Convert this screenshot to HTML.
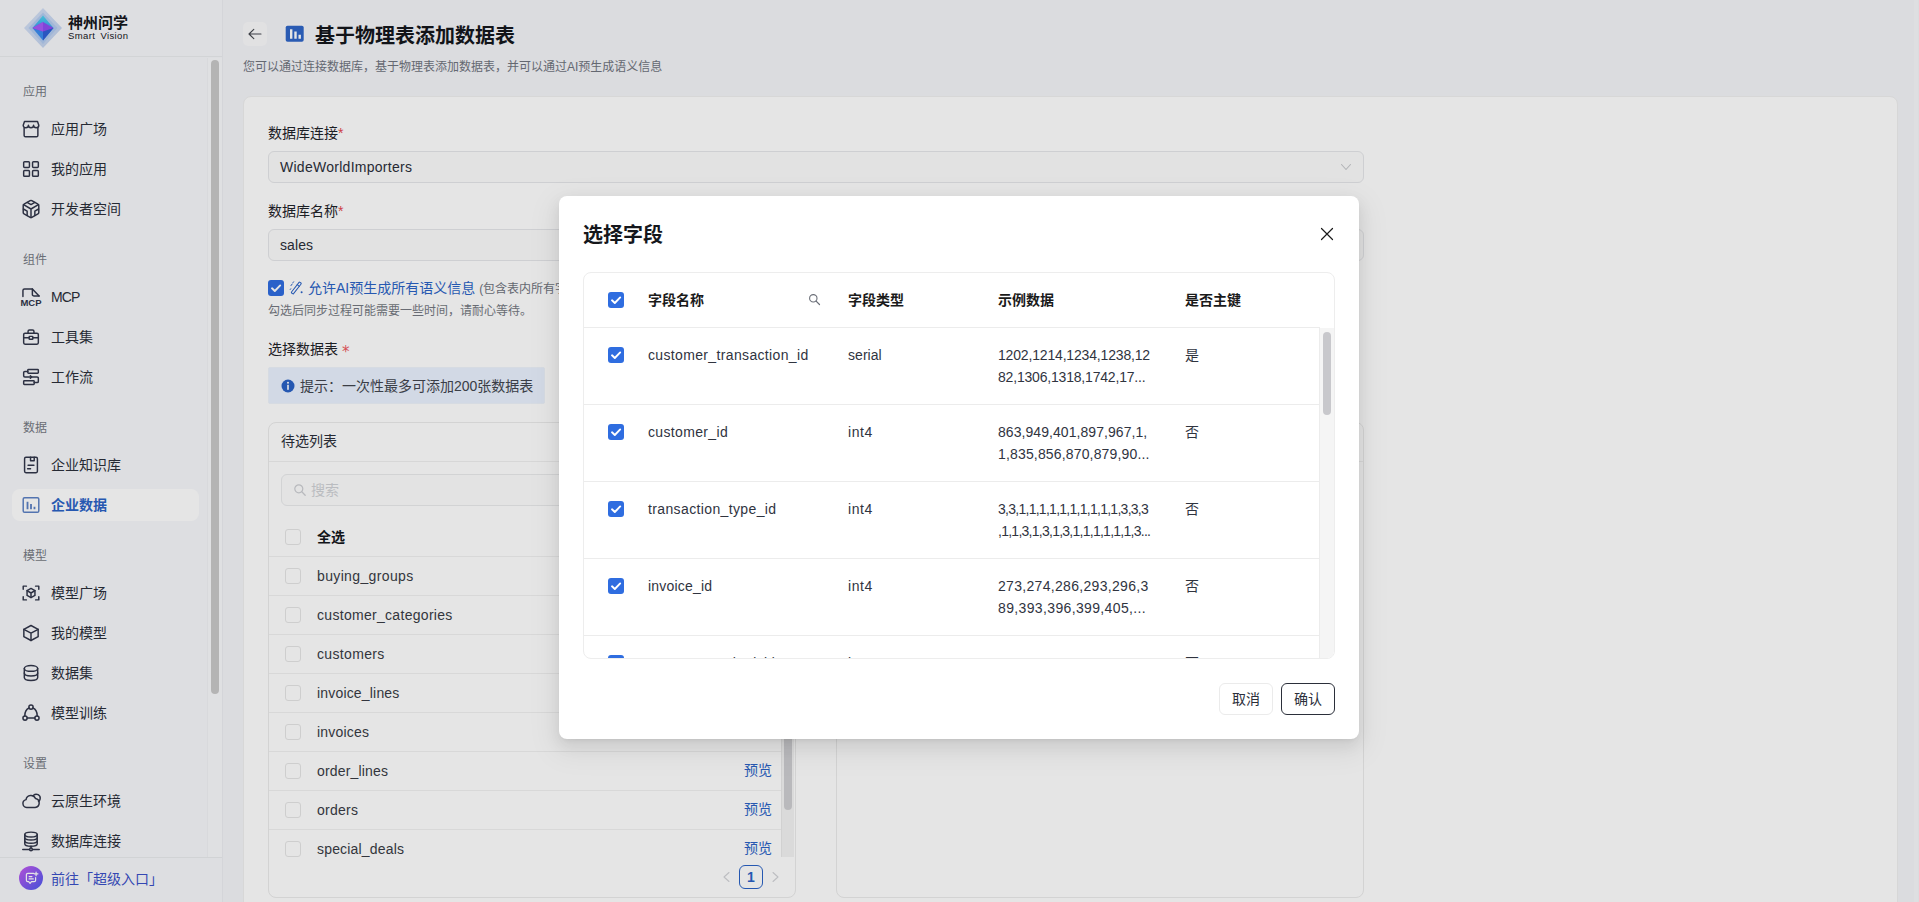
<!DOCTYPE html>
<html lang="zh-CN">
<head>
<meta charset="utf-8">
<title>基于物理表添加数据表</title>
<style>
*{box-sizing:border-box;margin:0;padding:0}
html,body{width:1919px;height:902px;overflow:hidden}
body{font-family:"Liberation Sans","Noto Sans CJK SC",sans-serif;font-size:14px;color:#1f2329;background:#f4f5f9;position:relative}
.abs{position:absolute}
.t{position:absolute;white-space:nowrap;line-height:20px;height:20px}
/* sidebar */
#side{position:absolute;left:0;top:0;width:223px;height:902px;background:#f7f8fb;border-right:1px solid #eceef2}
#side .hd{position:absolute;left:0;top:0;width:222px;height:57px;border-bottom:1px solid #eaecef}
.sec{position:absolute;left:23px;font-size:12px;color:#767a84;line-height:16px;height:16px;white-space:nowrap}
.it{position:absolute;left:51px;font-size:14px;color:#2b2f3a;line-height:20px;height:20px;white-space:nowrap}
.ic{position:absolute;left:20px;width:22px;height:22px}
.ic svg{width:22px;height:22px;display:block;fill:none;stroke:#31364a;stroke-width:1.6;stroke-linecap:round;stroke-linejoin:round}
/* main */
#card{position:absolute;left:243px;top:96px;width:1655px;height:830px;background:#fff;border:1px solid #f0f0f0;border-radius:8px}
.lbl{position:absolute;left:268px;font-size:14px;color:#1f2329;line-height:20px;white-space:nowrap}
.req{color:#e5484d}
.inp{position:absolute;left:268px;width:1096px;height:32px;border:1px solid #e6e7ea;border-radius:6px;background:#fcfcfc;font-size:14px;line-height:30px;padding-left:11px;color:#2b2f3a}
.cb{position:absolute;width:16px;height:16px;border-radius:3px;background:#2f6de0}
.cb svg{position:absolute;left:0;top:0;width:16px;height:16px}
.ucb{position:absolute;width:16px;height:16px;border-radius:3px;border:1px solid #e6e6e6;background:#fff}
.panel{position:absolute;top:422px;width:528px;height:476px;border:1px solid #ebebeb;border-radius:8px;background:#fff}
.row{position:absolute;left:269px;width:512px;height:39px;border-top:1px solid #f1f1f1}
.rt{position:absolute;left:317px;font-size:14px;color:#393c45;line-height:20px;white-space:nowrap}
.pv{position:absolute;left:744px;font-size:14px;color:#2b63c6;line-height:20px;white-space:nowrap}
/* overlay + modal */
#mask{position:absolute;left:0;top:0;width:1919px;height:902px;background:rgba(0,0,0,.1)}
#modal{position:absolute;left:559px;top:197px;width:800px;height:542px}
#mbg{position:absolute;left:0;top:-1px;width:800px;height:543px;background:#fff;border-radius:8px;box-shadow:0 6px 16px rgba(0,0,0,.08),0 3px 6px -4px rgba(0,0,0,.12),0 9px 28px 8px rgba(0,0,0,.05)}
#tbl{position:absolute;left:24px;top:75px;width:752px;height:387px;border:1px solid #ededed;border-radius:8px;overflow:hidden}
.th{position:absolute;top:17px;font-size:14px;font-weight:bold;color:#1a1a1a;line-height:20px;white-space:nowrap}
.tr{position:absolute;left:0;width:736px;height:77px;border-top:1px solid #ececec}
.td{position:absolute;top:16px;font-size:14px;color:#30343f;line-height:22px;white-space:nowrap}
.btn{position:absolute;top:486px;height:32px;border-radius:6px;font-size:14px;line-height:30px;text-align:center;color:#2b2f3a;background:#fff}
</style>
</head>
<body>
<div id="side">
<div class="hd"></div>
<svg class="abs" style="left:22px;top:7px" width="42" height="42" viewBox="0 0 42 42">
<defs><linearGradient id="lg0" x1="0" y1="0" x2="1" y2="1"><stop offset="0" stop-color="#d6e2f6"/><stop offset="1" stop-color="#bfd0ee"/></linearGradient>
<linearGradient id="lg1" x1="0" y1="0" x2="0" y2="1"><stop offset="0" stop-color="#4fd6ee"/><stop offset="1" stop-color="#3f9ff0"/></linearGradient></defs>
<path d="M21 1L40 21 21 41 2 21z" fill="url(#lg0)"/>
<path d="M21 5.500L35.500 21 21 37 6.500 21z" fill="#adc8f0" opacity=".8"/>
<path d="M21 8.500L31.500 21H10.500z" fill="url(#lg1)"/>
<path d="M10.500 21h21L21 33.500z" fill="#3a8cf0"/><path d="M21 21h10.500L21 33.500z" fill="#2f5fd6"/>
<path d="M10.500 21L21 15l10.500 6L21 24.500z" fill="#8f4cf2"/><path d="M10.500 21L21 15v9.500z" fill="#a85cf8"/>
</svg>
<div class="abs" style="left:68px;top:13px;font-size:15px;font-weight:bold;line-height:20px;color:#15171c;letter-spacing:0px;white-space:nowrap">神州问学</div>
<div class="abs" style="left:68px;top:30px;font-size:9.500px;line-height:12px;color:#15171c;letter-spacing:.4px;white-space:nowrap;word-spacing:2px">Smart Vision</div>
<div class="abs" style="left:207px;top:58px;width:15px;height:800px;background:#f9fafc;border-left:1px solid #f1f2f5"></div>
<div class="abs" style="left:211px;top:60px;width:8px;height:634px;border-radius:4px;background:#c9c9c9"></div>
<div class="abs" style="left:12px;top:489px;width:187px;height:32px;border-radius:8px;background:#fff"></div>
<div class="sec" style="top:84px">应用</div>
<div class="sec" style="top:252px">组件</div>
<div class="sec" style="top:420px">数据</div>
<div class="sec" style="top:548px">模型</div>
<div class="sec" style="top:756px">设置</div>
<div class="ic" style="top:118px"><svg viewBox="0 0 24 24"><path d="M4.5 10.5V19a1.5 1.5 0 0 0 1.500 1.500h12a1.500 1.500 0 0 0 1.500-1.500v-8.500"/><path d="M3.500 8l1.400-4.200h14.200l1.400 4.200c0 1.500-1.100 2.700-2.800 2.700s-2.900-1.200-2.900-2.700c0 1.500-1.200 2.700-2.800 2.700s-2.800-1.200-2.800-2.700c0 1.500-1.200 2.700-2.900 2.700s-2.800-1.200-2.800-2.700z"/></svg></div>
<div class="it" style="top:119px">应用广场</div>
<div class="ic" style="top:158px"><svg viewBox="0 0 24 24"><rect x="4" y="4" width="6.300" height="6.300" rx="1"/><rect x="13.700" y="4" width="6.300" height="6.300" rx="1"/><rect x="4" y="13.700" width="6.300" height="6.300" rx="1"/><rect x="13.700" y="13.700" width="6.300" height="6.300" rx="1"/></svg></div>
<div class="it" style="top:159px">我的应用</div>
<div class="ic" style="top:198px"><svg viewBox="0 0 24 24"><path d="M20.500 15.800V8.200a1.700 1.700 0 0 0-.9-1.500l-6.700-3.800a1.800 1.800 0 0 0-1.800 0L4.400 6.700a1.700 1.700 0 0 0-.9 1.500v7.600a1.700 1.700 0 0 0 .9 1.500l6.700 3.800a1.800 1.800 0 0 0 1.800 0l6.700-3.800a1.700 1.700 0 0 0 .9-1.500z"/><path d="M7.800 4.800L12 7.200l4.200-2.400M7.800 19.200v-4.800L3.700 12M20.300 12l-4.100 2.400v4.800M3.900 7.300L12 12l8.100-4.700M12 21.300V12"/></svg></div>
<div class="it" style="top:199px">开发者空间</div>
<div class="ic" style="top:286px"><svg viewBox="0 0 24 24"><path d="M3.200 11.500V5a1.800 1.800 0 0 1 1.800-1.800h8.500l7.300 7.800"/><path d="M13.500 3.200v6a1.800 1.800 0 0 0 1.800 1.800h5.500"/><text x=".5" y="22" textLength="23" lengthAdjust="spacingAndGlyphs" font-size="9.300" font-weight="bold" font-family="Liberation Sans, sans-serif" fill="#31364a" stroke="none">MCP</text></svg></div>
<div class="it" style="top:287px;letter-spacing:-.9px">MCP</div>
<div class="ic" style="top:326px"><svg viewBox="0 0 24 24"><rect x="4" y="7.800" width="16" height="12" rx="1.500"/><path d="M8.800 7.800V5.800a1.500 1.500 0 0 1 1.500-1.500h3.400a1.500 1.500 0 0 1 1.500 1.500v2M4 12.800h6M14 12.800h6"/><rect x="10" y="11.300" width="4" height="3.200" rx=".6"/></svg></div>
<div class="it" style="top:327px">工具集</div>
<div class="ic" style="top:366px"><svg viewBox="0 0 24 24"><rect x="8.500" y="3.800" width="11.500" height="4.200" rx=".8"/><rect x="4" y="16" width="11.500" height="4.200" rx=".8"/><path d="M8.500 5.900H5.300a1.300 1.300 0 0 0-1.300 1.300v3.500a1.300 1.300 0 0 0 1.300 1.300h13.400a1.300 1.300 0 0 1 1.300 1.300v3.500a1.300 1.300 0 0 1-1.300 1.300h-3.200"/><path d="M11.300 10.600l1.400 1.400-1.400 1.400"/></svg></div>
<div class="it" style="top:367px">工作流</div>
<div class="ic" style="top:454px"><svg viewBox="0 0 24 24"><rect x="5" y="3.600" width="14" height="16.800" rx="1.500"/><path d="M11.500 3.600v3.800h4v-3.800M8.800 12.200h6.400M8.300 16.200h3.200"/></svg></div>
<div class="it" style="top:455px">企业知识库</div>
<div class="ic" style="top:494px"><svg viewBox="0 0 24 24" style="stroke:#5d82c4"><rect x="3.500" y="4" width="17" height="16" rx="1.500"/><path d="M8.200 16.500V8.500M12 16.500v-5.500M15.800 16.500v-2.500" stroke-width="2" stroke-linecap="butt"/></svg></div>
<div class="it" style="top:495px;color:#2b63c6;font-weight:bold">企业数据</div>
<div class="ic" style="top:582px"><svg viewBox="0 0 24 24"><path d="M3.500 8V4.500h3.500M17 4.500h3.500V8M20.500 16v3.500H17M7 19.500H3.500V16"/><path d="M12 7l4.300 2.400v5.200L12 17l-4.300-2.400V9.400z"/><path d="M7.700 9.400L12 12l4.300-2.600M12 12v5"/></svg></div>
<div class="it" style="top:583px">模型广场</div>
<div class="ic" style="top:622px"><svg viewBox="0 0 24 24"><path d="M12 3.800l7.800 4.200v8L12 20.200 4.200 16V8z"/><path d="M4.200 8l7.800 4.200L19.800 8M12 12.200v8"/></svg></div>
<div class="it" style="top:623px">我的模型</div>
<div class="ic" style="top:662px"><svg viewBox="0 0 24 24"><ellipse cx="12" cy="7" rx="7.300" ry="3.200"/><path d="M4.700 7v10c0 1.800 3.300 3.200 7.300 3.200s7.300-1.400 7.300-3.200V7"/><path d="M4.700 12c0 1.800 3.300 3.200 7.300 3.200s7.300-1.400 7.300-3.200"/></svg></div>
<div class="it" style="top:663px">数据集</div>
<div class="ic" style="top:702px"><svg viewBox="0 0 24 24"><circle cx="12" cy="5.500" r="2.300"/><circle cx="5.500" cy="17.500" r="2.300"/><circle cx="18.500" cy="17.500" r="2.300"/><path d="M7.800 17.500h8.400M9.900 6.500c-3 1.300-4.700 4.300-4.700 8.700M14.100 6.500c3 1.300 4.700 4.300 4.700 8.700"/></svg></div>
<div class="it" style="top:703px">模型训练</div>
<div class="ic" style="top:790px"><svg viewBox="0 0 24 24"><path d="M7.300 19a4.300 4.300 0 0 1-.7-8.500 5.400 5.400 0 0 1 10.300-1.200 4.900 4.900 0 0 1-.4 9.700z"/><path d="M14.800 5.800a4.300 4.300 0 0 1 7.200 3.800c-.2 1.300-.8 2.300-1.800 3"/></svg></div>
<div class="it" style="top:791px">云原生环境</div>
<div class="ic" style="top:830px"><svg viewBox="0 0 24 24"><ellipse cx="12" cy="5" rx="6.800" ry="2.700"/><path d="M5.200 5v10c0 1.500 3 2.700 6.800 2.700s6.800-1.200 6.800-2.700V5"/><path d="M5.200 8.300c0 1.500 3 2.700 6.800 2.700s6.800-1.200 6.800-2.700M5.200 11.700c0 1.500 3 2.700 6.800 2.700s6.800-1.200 6.800-2.700M12 17.700v2M3 21.200h7.500M13.500 21.200H21"/><circle cx="12" cy="21.200" r="1.500"/></svg></div>
<div class="it" style="top:831px">数据库连接</div>
<div class="abs" style="left:0;top:857px;width:222px;height:45px;border-top:1px solid #e9ebee;background:#f7f8fb"></div>
<svg class="abs" style="left:19px;top:866px" width="24" height="24" viewBox="0 0 26 26"><defs><linearGradient id="lg2" x1="0" y1="0" x2="1" y2="1"><stop offset="0" stop-color="#c85af0"/><stop offset="1" stop-color="#4a5af0"/></linearGradient></defs><circle cx="13" cy="13" r="13" fill="url(#lg2)"/><path d="M8 9.500a1.500 1.500 0 0 1 1.500-1.500h6.500M8 9.500v6a1.500 1.500 0 0 0 1.500 1.500h1l1.500 1.800 1.500-1.800h3a1.500 1.500 0 0 0 1.500-1.500v-3M11 11.500h3M11 14h4.500M18.500 6.500v4M16.500 8.500h4" fill="none" stroke="#fff" stroke-width="1.300" stroke-linecap="round" stroke-linejoin="round"/></svg>
<div class="abs" style="left:51px;top:869px;font-size:14px;line-height:20px;color:#3a50c8;white-space:nowrap">前往「超级入口」</div>
</div>
<div id="main">
<div class="abs" style="left:243px;top:22px;width:24px;height:24px;border-radius:5px;background:#fbfbfc"></div>
<svg class="abs" style="left:247px;top:26px" width="16" height="16" viewBox="0 0 16 16"><path d="M14 8H2M6.800 3.300L2 8l4.800 4.700" fill="none" stroke="#44474f" stroke-width="1.100" stroke-linecap="round" stroke-linejoin="round"/></svg>
<svg class="abs" style="left:283px;top:23px" width="22" height="22" viewBox="0 0 22 22"><rect x="0" y="0" width="22" height="22" rx="5" fill="#f6f7fa"/><rect x="2.700" y="2.700" width="18" height="16" rx="1.800" fill="#2f66c8"/><path d="M8.200 15.800V6.300M12.500 15.800V8.600M16.700 15.800v-4" stroke="#fff" stroke-width="2.400" stroke-linecap="butt" fill="none"/></svg>
<div class="abs" style="left:315px;top:22px;font-size:20px;font-weight:bold;line-height:28px;color:#15171c;white-space:nowrap">基于物理表添加数据表</div>
<div class="abs" style="left:243px;top:59px;font-size:12px;line-height:16px;color:#70747e;white-space:nowrap">您可以通过连接数据库，基于物理表添加数据表，并可以通过AI预生成语义信息</div>
<div id="card"></div>
<div class="abs" style="left:1914px;top:0;width:4px;height:902px;background:#f8f9fb"></div>
<div class="lbl" style="top:123px">数据库连接<span class="req">*</span></div>
<div class="inp" style="top:151px"><span style="letter-spacing:0.27px">WideWorldImporters</span></div>
<svg class="abs" style="left:1340px;top:161px" width="12" height="12" viewBox="0 0 12 12"><path d="M1.500 3.500L6 8.500l4.500-5" fill="none" stroke="#c6c8cc" stroke-width="1.100" stroke-linecap="round" stroke-linejoin="round"/></svg>
<div class="lbl" style="top:201px">数据库名称<span class="req">*</span></div>
<div class="inp" style="top:229px"><span style="letter-spacing:0.08px">sales</span></div>
<svg class="abs" style="left:1340px;top:239px" width="12" height="12" viewBox="0 0 12 12"><path d="M1.500 3.500L6 8.500l4.500-5" fill="none" stroke="#c6c8cc" stroke-width="1.100" stroke-linecap="round" stroke-linejoin="round"/></svg>
<div class="cb" style="left:268px;top:280px"><svg viewBox="0 0 16 16"><path d="M4 8.300l2.800 2.700L12.200 5.400" fill="none" stroke="#fff" stroke-width="1.900" stroke-linecap="round" stroke-linejoin="round"/></svg></div>
<svg class="abs" style="left:289px;top:280px" width="16" height="16" viewBox="0 0 16 16"><g fill="none" stroke="#2b63c6" stroke-width="1" stroke-linecap="round"><g transform="rotate(38 7.300 8)"><rect x="6" y="1.200" width="2.600" height="13.600" rx=".7"/><path d="M6 4.800h2.600"/></g><path d="M2 5.600l1.200-1.600M4 2.600l.6-.8M1.200 9.500l.5-.7"/></g><circle cx="12.600" cy="12.200" r="1" fill="#2b63c6"/></svg>
<div class="abs" style="left:308px;top:278px;font-size:14px;line-height:20px;color:#2b63c6;white-space:nowrap">允许AI预生成所有语义信息 <span style="font-size:12px;color:#70747e">(包含表内所有字段的业务名称、描述等)</span></div>
<div class="abs" style="left:268px;top:303px;font-size:12px;line-height:16px;color:#757982;white-space:nowrap">勾选后同步过程可能需要一些时间，请耐心等待。</div>
<div class="lbl" style="top:339px">选择数据表</div>
<div class="abs" style="left:342px;top:342px;font-family:'DejaVu Sans',sans-serif;font-size:15px;line-height:20px;color:#ee5a60">*</div>
<div class="abs" style="left:268px;top:367px;width:277px;height:37px;border-radius:2px;background:#eaf2ff;border:1px solid #eff4fc"></div>
<svg class="abs" style="left:281px;top:379px" width="14" height="14" viewBox="0 0 14 14"><circle cx="7" cy="7" r="6.500" fill="#2b63c6"/><rect x="6.200" y="5.800" width="1.600" height="5" fill="#fff"/><circle cx="7" cy="3.800" r="1" fill="#fff"/></svg>
<div class="abs" style="left:300px;top:376px;font-size:14px;line-height:20px;color:#42464f;white-space:nowrap">提示：一次性最多可添加200张数据表</div>
<div class="panel" style="left:268px"></div>
<div class="panel" style="left:836px"></div>
<div class="abs" style="left:269px;top:461px;width:526px;height:1px;background:#f0f0f0"></div>
<div class="abs" style="left:837px;top:461px;width:526px;height:1px;background:#f0f0f0"></div>
<div class="abs" style="left:281px;top:431px;font-size:14px;line-height:20px;color:#2b2f3a;white-space:nowrap">待选列表</div>
<div class="abs" style="left:281px;top:474px;width:500px;height:32px;border:1px solid #eaebed;border-radius:6px;background:#fdfdfd"></div>
<svg class="abs" style="left:293px;top:483px" width="14" height="14" viewBox="0 0 14 14"><circle cx="5.800" cy="5.800" r="4" fill="none" stroke="#cdcfd3" stroke-width="1.200"/><path d="M8.800 8.800l3.400 3.400" stroke="#cdcfd3" stroke-width="1.300" stroke-linecap="round"/></svg>
<div class="abs" style="left:311px;top:480px;font-size:14px;line-height:20px;color:#d0d2d6;white-space:nowrap">搜索</div>
<div class="ucb" style="left:285px;top:529px"></div>
<div class="rt" style="top:527px;font-weight:bold;color:#15171c">全选</div>
<div class="row" style="top:556px"></div>
<div class="ucb" style="left:285px;top:568px"></div>
<div class="rt" style="top:566px"><span style="letter-spacing:0.36px">buying_groups</span></div>
<div class="pv" style="top:565px">预览</div>
<div class="row" style="top:595px"></div>
<div class="ucb" style="left:285px;top:607px"></div>
<div class="rt" style="top:605px"><span style="letter-spacing:0.3px">customer_categories</span></div>
<div class="pv" style="top:604px">预览</div>
<div class="row" style="top:634px"></div>
<div class="ucb" style="left:285px;top:646px"></div>
<div class="rt" style="top:644px"><span style="letter-spacing:0.34px">customers</span></div>
<div class="pv" style="top:643px">预览</div>
<div class="row" style="top:673px"></div>
<div class="ucb" style="left:285px;top:685px"></div>
<div class="rt" style="top:683px"><span style="letter-spacing:0.18px">invoice_lines</span></div>
<div class="pv" style="top:682px">预览</div>
<div class="row" style="top:712px"></div>
<div class="ucb" style="left:285px;top:724px"></div>
<div class="rt" style="top:722px"><span style="letter-spacing:0.2px">invoices</span></div>
<div class="pv" style="top:721px">预览</div>
<div class="row" style="top:751px"></div>
<div class="ucb" style="left:285px;top:763px"></div>
<div class="rt" style="top:761px"><span style="letter-spacing:0.17px">order_lines</span></div>
<div class="pv" style="top:760px">预览</div>
<div class="row" style="top:790px"></div>
<div class="ucb" style="left:285px;top:802px"></div>
<div class="rt" style="top:800px"><span style="letter-spacing:0.26px">orders</span></div>
<div class="pv" style="top:799px">预览</div>
<div class="row" style="top:829px"></div>
<div class="ucb" style="left:285px;top:841px"></div>
<div class="rt" style="top:839px"><span style="letter-spacing:0.18px">special_deals</span></div>
<div class="pv" style="top:838px">预览</div>
<div class="abs" style="left:781px;top:517px;width:13px;height:340px;background:#f3f3f3;border-left:1px solid #e9e9e9"></div>
<div class="abs" style="left:784px;top:530px;width:8px;height:280px;border-radius:4px;background:#cfcfd2"></div>
<svg class="abs" style="left:721px;top:871px" width="12" height="12" viewBox="0 0 12 12"><path d="M8 1.500L3 6l5 4.500" fill="none" stroke="#d3d4d8" stroke-width="1.100" stroke-linecap="round" stroke-linejoin="round"/></svg>
<div class="abs" style="left:739px;top:865px;width:24px;height:24px;border:1px solid #2b63c6;border-radius:6px;font-size:14px;font-weight:bold;color:#2b63c6;text-align:center;line-height:22px">1</div>
<svg class="abs" style="left:769px;top:871px" width="12" height="12" viewBox="0 0 12 12"><path d="M4 1.500L9 6 4 10.500" fill="none" stroke="#d3d4d8" stroke-width="1.100" stroke-linecap="round" stroke-linejoin="round"/></svg>
</div>
<div id="mask"></div>
<div id="modal">
<div id="mbg"></div>
<div class="abs" style="left:24px;top:24px;font-size:20px;font-weight:bold;line-height:28px;color:#15171c;white-space:nowrap">选择字段</div>
<svg class="abs" style="left:761px;top:30px" width="14" height="14" viewBox="0 0 14 14"><path d="M1.500 1.500l11 11M12.500 1.500l-11 11" fill="none" stroke="#1a1a1a" stroke-width="1.200" stroke-linecap="round"/></svg>
<div id="tbl"><div class="cb" style="left:24px;top:19px"><svg viewBox="0 0 16 16"><path d="M4 8.300l2.800 2.700L12.200 5.400" fill="none" stroke="#fff" stroke-width="1.900" stroke-linecap="round" stroke-linejoin="round"/></svg></div>
<div class="th" style="left:64px">字段名称</div>
<svg class="abs" style="left:224px;top:20px" width="13" height="13" viewBox="0 0 13 13"><circle cx="5.300" cy="5.300" r="3.700" fill="none" stroke="#6b6f78" stroke-width="1.100"/><path d="M8.100 8.100l3.400 3.400" stroke="#6b6f78" stroke-width="1.200" stroke-linecap="round"/></svg>
<div class="th" style="left:264px">字段类型</div>
<div class="th" style="left:414px">示例数据</div>
<div class="th" style="left:601px">是否主键</div>
<div class="tr" style="top:54px"><div class="cb" style="left:24px;top:19px"><svg viewBox="0 0 16 16"><path d="M4 8.300l2.800 2.700L12.200 5.400" fill="none" stroke="#fff" stroke-width="1.900" stroke-linecap="round" stroke-linejoin="round"/></svg></div><div class="td" style="left:64px"><span style="letter-spacing:0.35px">customer_transaction_id</span></div><div class="td" style="left:264px"><span style="letter-spacing:0.05px">serial</span></div><div class="td" style="left:414px"><span style="letter-spacing:-0.17px">1202,1214,1234,1238,12</span><br><span style="letter-spacing:-0.19px">82,1306,1318,1742,17...</span></div><div class="td" style="left:601px">是</div></div>
<div class="tr" style="top:131px"><div class="cb" style="left:24px;top:19px"><svg viewBox="0 0 16 16"><path d="M4 8.300l2.800 2.700L12.200 5.400" fill="none" stroke="#fff" stroke-width="1.900" stroke-linecap="round" stroke-linejoin="round"/></svg></div><div class="td" style="left:64px"><span style="letter-spacing:0.35px">customer_id</span></div><div class="td" style="left:264px"><span style="letter-spacing:0.54px">int4</span></div><div class="td" style="left:414px"><span style="letter-spacing:0.06px">863,949,401,897,967,1,</span><br><span style="letter-spacing:0.16px">1,835,856,870,879,90...</span></div><div class="td" style="left:601px">否</div></div>
<div class="tr" style="top:208px"><div class="cb" style="left:24px;top:19px"><svg viewBox="0 0 16 16"><path d="M4 8.300l2.800 2.700L12.200 5.400" fill="none" stroke="#fff" stroke-width="1.900" stroke-linecap="round" stroke-linejoin="round"/></svg></div><div class="td" style="left:64px"><span style="letter-spacing:0.37px">transaction_type_id</span></div><div class="td" style="left:264px"><span style="letter-spacing:0.54px">int4</span></div><div class="td" style="left:414px"><span style="letter-spacing:-0.73px">3,3,1,1,1,1,1,1,1,1,1,1,3,3,3</span><br><span style="letter-spacing:-0.74px">,1,1,3,1,3,1,3,1,1,1,1,1,1,3...</span></div><div class="td" style="left:601px">否</div></div>
<div class="tr" style="top:285px"><div class="cb" style="left:24px;top:19px"><svg viewBox="0 0 16 16"><path d="M4 8.300l2.800 2.700L12.200 5.400" fill="none" stroke="#fff" stroke-width="1.900" stroke-linecap="round" stroke-linejoin="round"/></svg></div><div class="td" style="left:64px"><span style="letter-spacing:0.19px">invoice_id</span></div><div class="td" style="left:264px"><span style="letter-spacing:0.54px">int4</span></div><div class="td" style="left:414px"><span style="letter-spacing:0.31px">273,274,286,293,296,3</span><br><span style="letter-spacing:0.36px">89,393,396,399,405,...</span></div><div class="td" style="left:601px">否</div></div>
<div class="tr" style="top:362px"><div class="cb" style="left:24px;top:19px"><svg viewBox="0 0 16 16"><path d="M4 8.300l2.800 2.700L12.200 5.400" fill="none" stroke="#fff" stroke-width="1.900" stroke-linecap="round" stroke-linejoin="round"/></svg></div><div class="td" style="left:64px">payment_method_id</div><div class="td" style="left:264px"><span style="letter-spacing:0.54px">int4</span></div><div class="td" style="left:414px">4,4,4,4,4,4,4,4,4,4,4<br>4,4,4,4,4,4,4,4,4,...</div><div class="td" style="left:601px">否</div></div>
<div class="abs" style="left:735px;top:55px;width:15px;height:331px;background:#f5f5f5;border-left:1px solid #ececec"></div>
<div class="abs" style="left:739px;top:59px;width:8px;height:83px;border-radius:4px;background:#c8c8cc"></div></div>
<div class="btn" style="left:660px;width:54px;border:1px solid #ebebeb">取消</div>
<div class="btn" style="left:722px;width:54px;border:1px solid #2b2f3a">确认</div>
</div>
</body>
</html>
